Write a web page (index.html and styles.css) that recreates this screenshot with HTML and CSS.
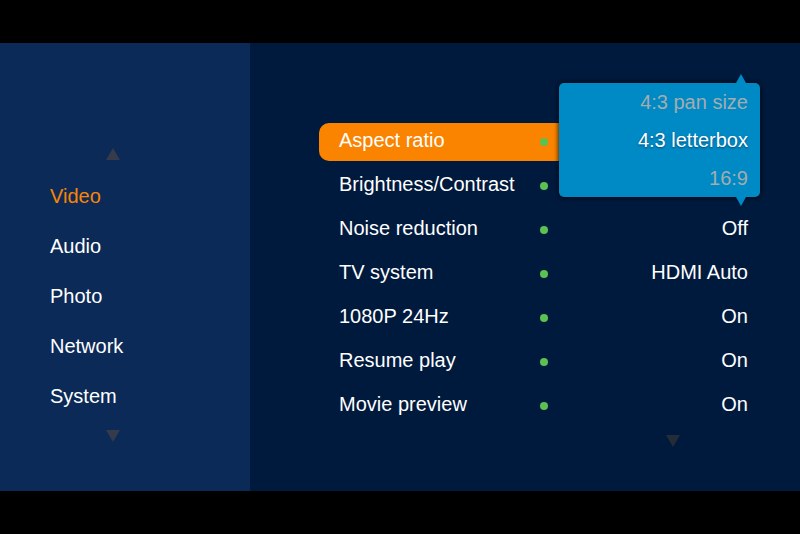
FILE: index.html
```html
<!DOCTYPE html>
<html lang="en">
<head>
<meta charset="utf-8">
<meta name="viewport" content="width=device-width, initial-scale=1">
<title>Video settings</title>
<link rel="stylesheet" href="styles.css">
</head>
<body>
<div class="screen">
  <nav class="sidebar">
    <svg class="arrow" viewBox="0 0 14 12" aria-hidden="true"><path d="M7 0 14 12H0Z"/></svg>
    <ul class="menu">
      <li><a class="menu-link current" href="#video">Video</a></li>
      <li><a class="menu-link" href="#audio">Audio</a></li>
      <li><a class="menu-link" href="#photo">Photo</a></li>
      <li><a class="menu-link" href="#network">Network</a></li>
      <li><a class="menu-link" href="#system">System</a></li>
    </ul>
    <svg class="arrow" viewBox="0 0 14 12" aria-hidden="true"><path d="M0 0H14L7 12Z"/></svg>
  </nav>
  <main class="content">
    <ul class="settings">
      <li class="setting">
        <button class="row selected" type="button"><span class="label">Aspect ratio</span><span class="dot"></span></button>
        <div class="popup">
          <svg class="tip tip-up" viewBox="0 0 10 9" aria-hidden="true"><path d="M5 0 10 9H0Z"/></svg>
          <button class="option" type="button">4:3 pan size</button>
          <button class="option chosen" type="button">4:3 letterbox</button>
          <button class="option" type="button">16:9</button>
          <svg class="tip tip-down" viewBox="0 0 10 9" aria-hidden="true"><path d="M0 0H10L5 9Z"/></svg>
        </div>
      </li>
      <li class="setting"><button class="row" type="button"><span class="label">Brightness/Contrast</span><span class="dot"></span></button></li>
      <li class="setting"><button class="row" type="button"><span class="label">Noise reduction</span><span class="dot"></span><span class="value">Off</span></button></li>
      <li class="setting"><button class="row" type="button"><span class="label">TV system</span><span class="dot"></span><span class="value">HDMI Auto</span></button></li>
      <li class="setting"><button class="row" type="button"><span class="label">1080P 24Hz</span><span class="dot"></span><span class="value">On</span></button></li>
      <li class="setting"><button class="row" type="button"><span class="label">Resume play</span><span class="dot"></span><span class="value">On</span></button></li>
      <li class="setting"><button class="row" type="button"><span class="label">Movie preview</span><span class="dot"></span><span class="value">On</span></button></li>
    </ul>
    <svg class="arrow" viewBox="0 0 14 12" aria-hidden="true"><path d="M0 0H14L7 12Z"/></svg>
  </main>
</div>
</body>
</html>
```
FILE: styles.css
```css
* {
  box-sizing: border-box;
}

body {
  margin: 0;
  min-height: 100vh;
  padding: 43px 0;
  display: flex;
  background: #000;
  color: #fff;
  font: 20px/24px "Liberation Sans", Arial, sans-serif;
}

ul {
  margin: 0;
  padding: 0;
  list-style: none;
}

button {
  border: 0;
  margin: 0;
  background: none;
  color: inherit;
  font: inherit;
  cursor: pointer;
}

.screen {
  flex: 1;
  display: flex;
  background: #001a3d;
}

.sidebar {
  flex: 0 0 250px;
  padding: 105px 24px 48px 50px;
  background: #0b2a57;
}

.arrow {
  display: block;
  width: 14px;
  height: 12px;
}

.sidebar .arrow {
  margin-left: 56px;
  fill: #353b4b;
}

.menu {
  display: flex;
  flex-direction: column;
  gap: 26px;
  margin: 24px 0 22px;
}

.menu-link {
  display: block;
  color: inherit;
  text-decoration: none;
}

.menu-link.current {
  color: #fa8405;
}

.content {
  flex: 1;
  padding: 80px 40px 43px 69px;
}

.content .arrow {
  margin: 10px 80px 0 auto;
  fill: #242d37;
}

.settings {
  display: flex;
  flex-direction: column;
  gap: 6px;
}

.setting {
  position: relative;
}

.row {
  display: grid;
  grid-template-columns: 1fr 8px 212px;
  align-items: center;
  width: 100%;
  height: 38px;
  padding: 0 0 0 20px;
  border-radius: 10px;
  text-align: left;
}

.row.selected {
  background: #fa8300;
}

.label,
.value {
  padding-bottom: 4px;
}

.value {
  padding-right: 12px;
  text-align: right;
}

.dot {
  width: 8px;
  height: 8px;
  border-radius: 50%;
  background: #5bc152;
}

.popup {
  position: absolute;
  z-index: 1;
  top: -40px;
  right: 0;
  width: 201px;
  border-radius: 5px;
  background: #008ac5;
  box-shadow: 0 0 4px 1px rgba(0, 0, 0, 0.7);
}

.option {
  display: block;
  width: 100%;
  height: 38px;
  padding: 0 12px 0 0;
  color: #a5abaf;
  text-align: right;
}

.option.chosen {
  color: #fff;
  text-shadow: 0 1px 2px rgba(0, 30, 70, 0.6);
}

.tip {
  position: absolute;
  right: 14px;
  width: 10px;
  height: 9px;
  fill: #008ac5;
}

.tip-up {
  bottom: 100%;
}

.tip-down {
  top: 100%;
}
```
